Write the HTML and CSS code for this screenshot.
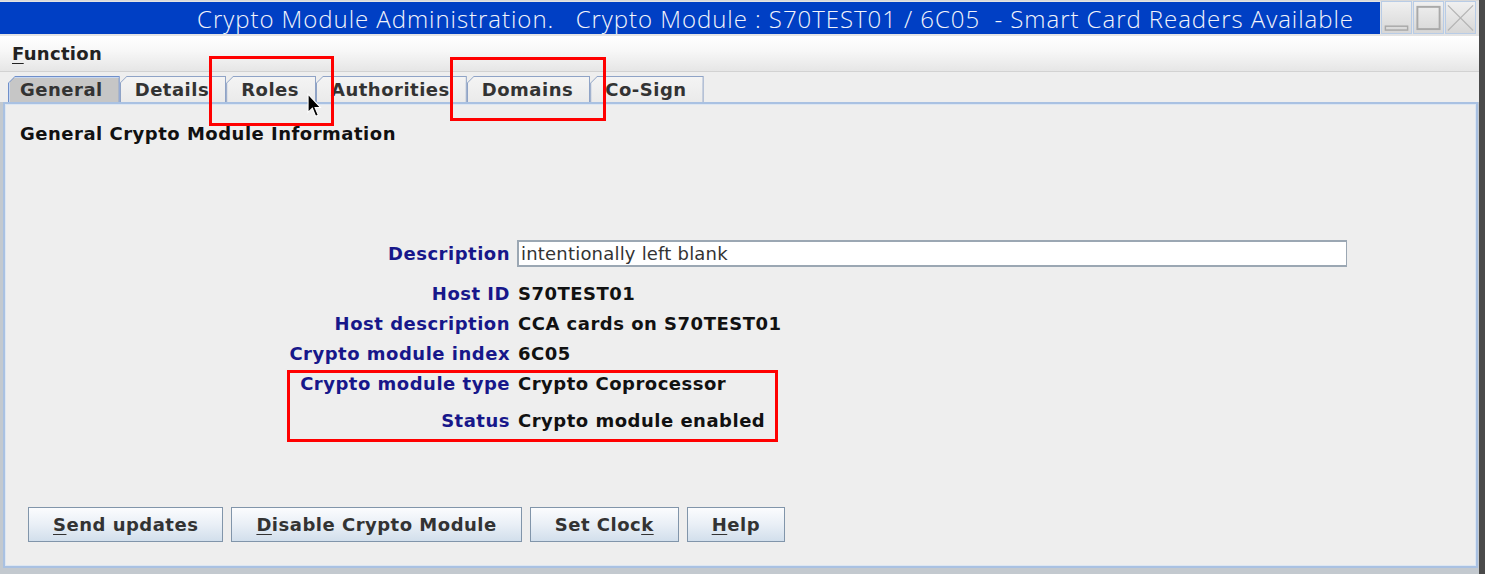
FILE: index.html
```html
<!DOCTYPE html>
<html>
<head>
<meta charset="utf-8">
<link rel="stylesheet" href="styles.css">
</head>
<body>
<div class="window">
  <div class="titlebar">
    <div class="title-area"><span class="title">Crypto Module Administration.&nbsp;&nbsp; Crypto Module : S70TEST01 / 6C05&nbsp; - Smart Card Readers Available</span></div>
    <div class="wm-buttons">
      <div class="wm-btn"><svg width="30" height="31" viewBox="0 0 30 31"><rect x="3.5" y="24.5" width="23" height="4" fill="none" stroke="#a9a9a9" stroke-width="1.5"/></svg></div>
      <div class="wm-btn"><svg width="30" height="31" viewBox="0 0 30 31"><rect x="3.5" y="4.5" width="23" height="23" fill="none" stroke="#a9a9a9" stroke-width="2"/></svg></div>
      <div class="wm-btn"><svg width="30" height="31" viewBox="0 0 30 31"><path d="M2 3 L28 29 M28 3 L2 29" stroke="#b5b5b5" stroke-width="1.3" fill="none"/></svg></div>
    </div>
  </div>
  <div class="menubar"><span class="menu"><u>F</u>unction</span></div>
  <div class="tabrow">
    <div class="tab selected">General</div>
    <div class="tab">Details</div>
    <div class="tab">Roles</div>
    <div class="tab">Authorities</div>
    <div class="tab">Domains</div>
    <div class="tab">Co-Sign</div>
  </div>
  <div class="panel">
    <div class="panel-title">General Crypto Module Information</div>
    <div class="form">
      <div class="row"><div class="label">Description</div><div class="input">intentionally left blank</div></div>
      <div class="row spaced"><div class="label">Host ID</div><div class="value">S70TEST01</div></div>
      <div class="row"><div class="label">Host description</div><div class="value">CCA cards on S70TEST01</div></div>
      <div class="row"><div class="label">Crypto module index</div><div class="value">6C05</div></div>
      <div class="row"><div class="label">Crypto module type</div><div class="value">Crypto Coprocessor</div></div>
      <div class="row spaced"><div class="label">Status</div><div class="value">Crypto module enabled</div></div>
    </div>
    <div class="buttons">
      <div class="btn"><u>S</u>end updates</div>
      <div class="btn"><u>D</u>isable Crypto Module</div>
      <div class="btn">Set Cloc<u>k</u></div>
      <div class="btn"><u>H</u>elp</div>
    </div>
  </div>
</div>
<div class="mark mark-roles"></div>
<div class="mark mark-domains"></div>
<div class="mark mark-form"></div>
<svg class="cursor" width="15" height="25" viewBox="0 0 14 23"><path d="M1 1 L1 18 L5 14 L8 21.5 L10.5 20.5 L7.5 13.3 L12.5 13.3 Z" fill="#000" stroke="#fff" stroke-width="1"/></svg>
</body>
</html>
```
FILE: styles.css
```css
html, body {
  margin: 0;
  padding: 0;
}
body {
  width: 1485px;
  height: 574px;
  background: #4a4a4a;
  position: relative;
  overflow: hidden;
  font-family: "DejaVu Sans", sans-serif;
  letter-spacing: 0.5px;
}
.window {
  width: 1479px;
  height: 574px;
  display: flex;
  flex-direction: column;
  background: #c3c9cf;
}
.titlebar {
  height: 35px;
  border-top: 1px solid #d9d9d9;
  display: flex;
  background: #e4e4e4;
}
.title-area {
  flex: 1;
  background: #003fc4;
  display: flex;
  align-items: center;
  justify-content: flex-end;
  padding-right: 26px;
  margin-top: 1px;
  height: 32px;
}
.title {
  color: #f2f4fb;
  font-family: "Open Sans", sans-serif;
  font-weight: 300;
  font-size: 24px;
  white-space: pre;
  letter-spacing: 0.95px;
}
.wm-buttons {
  display: flex;
  width: 98px;
  gap: 1px;
  padding-left: 1px;
}
.wm-btn {
  width: 31px;
  height: 33px;
  border: 1px solid #b8cce6;
  box-sizing: border-box;
  background: linear-gradient(#f0f0f0, #d7d7d7);
  display: flex;
  align-items: center;
  justify-content: center;
}
.menubar {
  height: 35px;
  background: linear-gradient(#ffffff 0%, #f8f8f8 40%, #e6e6e6 100%);
  border-bottom: 1px solid #d2d2d2;
  display: flex;
  align-items: center;
  padding-left: 12px;
}
.menu {
  font-weight: bold;
  font-size: 18px;
  color: #222;
  letter-spacing: 0.3px;
}
.menu u {
  text-underline-offset: 3px;
}
.tabrow {
  height: 30px;
  background: #eeeeee;
  display: flex;
  align-items: flex-end;
  padding-left: 8px;
}
.tab {
  position: relative;
  z-index: 0;
  height: 26px;
  display: flex;
  align-items: center;
  padding: 0 17px 0 15px;
  font-weight: bold;
  font-size: 18px;
  color: #333;
}
.tab::before {
  content: "";
  position: absolute;
  inset: 0;
  z-index: -2;
  background: #8fa3c6;
  clip-path: polygon(0 7px, 7px 0, 100% 0, 100% 100%, 0 100%);
}
.tab::after {
  content: "";
  position: absolute;
  inset: 1px 1px 0 1px;
  z-index: -1;
  background: linear-gradient(#f4f4f4, #eaeaea);
  clip-path: polygon(0 6px, 6px 0, 100% 0, 100% 100%, 0 100%);
}
.tab.selected {
  padding: 0 17px 0 12px;
}
.tab.selected::before {
  background: #6f8fca;
}
.tab.selected::after {
  inset: 1px 1px 0 1px;
  background: #c6c6c6;
  box-shadow: inset 1px 1px 0 #c8d8f0;
}
.panel {
  flex: 1;
  margin: 0 1px 6px 3px;
  border: 2px solid #a9c1e2;
  box-shadow: inset 0 0 0 1px #dce6f2;
  background: #eeeeee;
  padding: 18px 15px 0 15px;
  display: flex;
  flex-direction: column;
}
.panel-title {
  font-weight: bold;
  font-size: 18px;
  color: #111;
  line-height: 24px;
}
.form {
  margin-top: 94px;
  display: flex;
  flex-direction: column;
  gap: 8px;
}
.row {
  display: flex;
  align-items: center;
  gap: 8px;
  height: 22px;
}
.row:first-child {
  height: 27px;
}
.row.spaced {
  margin-top: 7px;
}
.label {
  width: 490px;
  text-align: right;
  font-weight: bold;
  font-size: 18px;
  color: #17178a;
}
.value {
  font-weight: bold;
  font-size: 18px;
  color: #111;
}
.input {
  width: 830px;
  height: 27px;
  box-sizing: border-box;
  margin-left: -1px;
  border: 1px solid #9ba7b3;
  border-width: 2px 1px 2px 2px;
  background: #fff;
  font-size: 18px;
  color: #333;
  padding-left: 2px;
  letter-spacing: 0.2px;
  display: flex;
  align-items: center;
}
.buttons {
  display: flex;
  gap: 8px;
  margin-top: 76px;
  margin-left: 8px;
}
.btn {
  height: 35px;
  box-sizing: border-box;
  border: 1px solid #8195aa;
  background: linear-gradient(#fbfcfe 0%, #e9eff6 50%, #d2dfec 100%);
  padding: 0 24px;
  display: flex;
  align-items: center;
  font-weight: bold;
  font-size: 18px;
  color: #333;
}
.btn u {
  text-underline-offset: 3px;
}
.mark {
  position: absolute;
  border: 3px solid #ff0000;
  box-sizing: border-box;
}
.mark-roles {
  left: 209px;
  top: 56px;
  width: 125px;
  height: 70px;
}
.mark-domains {
  left: 450px;
  top: 57px;
  width: 156px;
  height: 64px;
}
.mark-form {
  left: 287px;
  top: 370px;
  width: 491px;
  height: 72px;
}
.cursor {
  position: absolute;
  left: 307px;
  top: 93px;
}
```
